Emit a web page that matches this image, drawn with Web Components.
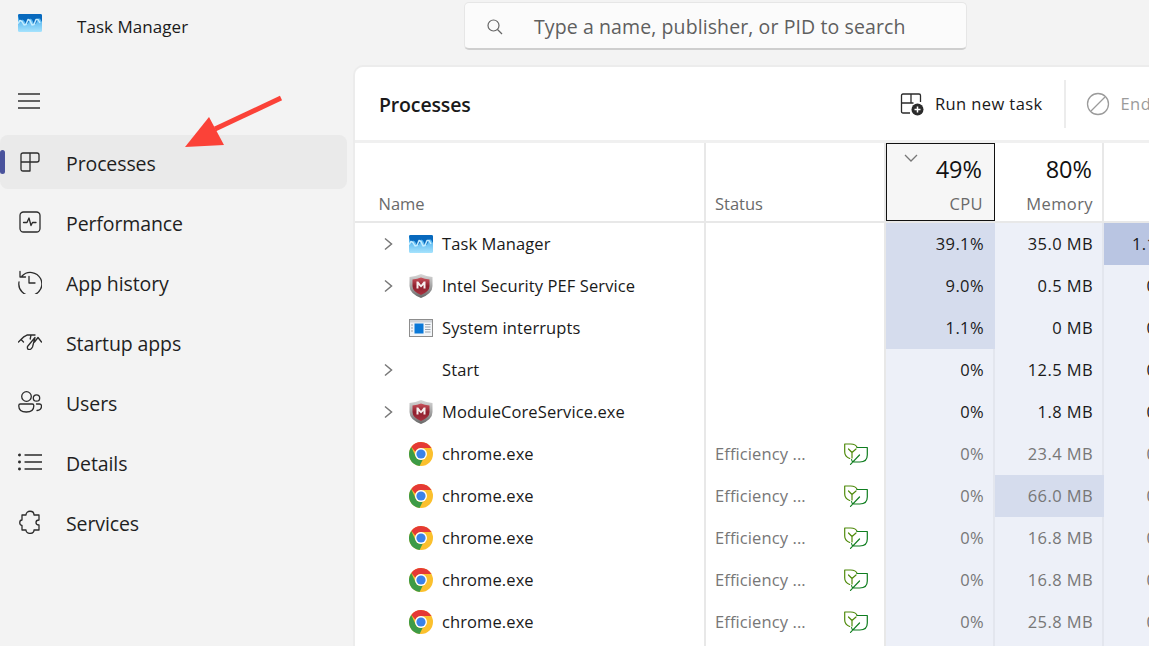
<!DOCTYPE html>
<html>
<head>
<meta charset="utf-8">
<title>Task Manager</title>
<style>
  html, body { margin: 0; height: 100%; overflow: hidden; background: #f3f3f3; }
  body { font-family: "Open Sans", "Noto Sans", sans-serif; color: #1b1b1b; }
  .shell { display: grid; grid-template-columns: 353px 796px; grid-template-rows: 65px 581px; height: 646px; width: 1149px; position: relative; overflow: hidden; }
  tm-titlebar { grid-column: 1 / 3; }
</style>
</head>
<body>
<template id="i-mcafee">
  <svg width="24" height="24" viewBox="0 0 24 24"><defs><linearGradient id="sv" x1="0" y1="0" x2="0" y2="1"><stop offset="0" stop-color="#d8d8d8"/><stop offset=".6" stop-color="#9a9a9a"/><stop offset="1" stop-color="#666"/></linearGradient><linearGradient id="rd" x1="0" y1="0" x2="0" y2="1"><stop offset="0" stop-color="#c9525c"/><stop offset=".5" stop-color="#8f1f2d"/><stop offset="1" stop-color="#a8323f"/></linearGradient></defs><path d="M.5 3q6-.5 11.500-3q5.500 2.500 11.500 3v9q0 7.500-11.500 12Q.5 19.500 .5 12z" fill="url(#sv)"/><path d="M3.500 5.500q5-.5 8.500-2q3.500 1.500 8.500 2v6.500q0 5.500-8.500 9Q3.500 17.500 3.500 12z" fill="url(#rd)"/><path d="M7.500 14.500V7.500h1.800L12 11l2.700-3.500h1.800v7h-2v-3.500L12 13.500l-2.500-2.500v3.500z" fill="#f6eeee"/></svg>
</template>
<template id="i-tm">
  <svg width="24" height="18" viewBox="0 0 24 18"><defs><linearGradient id="tmb" x1="0" y1="0" x2="0" y2="1"><stop offset="0" stop-color="#2f9fe8"/><stop offset="1" stop-color="#a6e3fd"/></linearGradient></defs><rect width="24" height="18" rx="1.500" fill="url(#tmb)"/><path d="M0 1.500Q0 0 1.500 0h21Q24 0 24 1.500V8l-2-3.500-2 0-2 5-2 .5-2-4.500-2-1-2 5-2 .5-2-3.500-2-1-2 3z" fill="#0869bd"/><path d="M0 9.500l2-3 2 1 2 3.500 2-.5 2-5 2 1 2 4.500 2-.5 2-5h2l2 3.500" fill="none" stroke="#c4ecff" stroke-width="1.500" stroke-linejoin="round"/></svg>
</template>
<template id="i-sys">
  <svg width="24" height="18" viewBox="0 0 24 18"><rect x=".5" y=".5" width="23" height="17" fill="#f2f5f8" stroke="#8d8d8d"/><rect x="1" y="1" width="22" height="2.500" fill="#cfd3d8"/><rect x="5.500" y="4.500" width="9" height="10" fill="#0a78d7"/><path d="M2 6h2M2 9h2M2 12h2M16 5.500h5.500M16 8h5.500M16 10.500h5.500M16 13h5.500" stroke="#9aa3ad"/></svg>
</template>
<template id="i-chrome">
  <svg width="24" height="24" viewBox="0 0 24 24"><circle cx="12" cy="12" r="12" fill="#fbc02d"/><path d="M12 0a12 12 0 0 1 10.400 6H12a6 6 0 0 0-5.600 3.800L2.300 5A12 12 0 0 1 12 0z" fill="#e53935"/><path d="M2.300 5l4.500 9.800a6 6 0 0 0 6.900 3L10.600 24A12 12 0 0 1 2.300 5z" fill="#3d9b46"/><circle cx="12" cy="12" r="6" fill="#fff"/><circle cx="12" cy="12" r="4.600" fill="#3b82e8"/></svg>
</template>
<template id="i-leaf">
  <svg width="24" height="22" viewBox="0 0 24 22" fill="none" stroke-width="1.200" stroke-linejoin="round" stroke-linecap="round"><path d="M.7 1h6q5 0 6.500 3.500M.7 1v8q0 4.500 5 6.500M4.500 6l3.500 3.500M12 6L8 9.500v5.500" stroke="#4f8a0a"/><path d="M13 4.500h10.300v7.500q0 7-7.500 7H9.500q-1.500 0-2-2.500M6.500 21.300l9-9.300" stroke="#0f7d1f"/></svg>
</template>

<div class="shell">
  <tm-titlebar></tm-titlebar>
  <tm-sidebar></tm-sidebar>
  <tm-panel></tm-panel>
  <tm-arrow></tm-arrow>
</div>

<script>
const iconUse = (id) => document.getElementById(id).innerHTML;

const COLUMNS = '349px 2px 178px 2px 109px 109px 109px';

class TmTitlebar extends HTMLElement {
  constructor() {
    super();
    this.attachShadow({ mode: 'open' });
  }

  connectedCallback() {
    this.shadowRoot.innerHTML = `
      <style>
        :host { display: flex; height: 65px; align-items: flex-start; box-sizing: border-box; }
        .logo { margin: 14px 0 0 18px; width: 24px; height: 18px; }
        .name { margin: 16px 0 0 35px; width: 387px; font-size: 17px; line-height: 22px; color: #1a1a1a; letter-spacing: .05px; }
        .search { box-sizing: border-box; width: 503px; height: 48px; margin-top: 2px; padding-top: 2px; background: #fbfbfb; border: 1px solid #e6e6e6; border-bottom: 2px solid #cfcfcf; border-radius: 5px; display: flex; align-items: center; padding-left: 21px; gap: 30px; color: #5f5f5f; font-size: 19.500px; letter-spacing: .1px; }
        svg { display: block; }
      </style>
      <div class="logo">${iconUse('i-tm')}</div>
      <div class="name">Task Manager</div>
      <div class="search">
        <svg width="18" height="18" viewBox="0 0 18 18" fill="none" stroke="#666" stroke-width="1.200"><circle cx="7.500" cy="7.500" r="5.500"/><path d="M11.500 11.500L16 16"/></svg>
        <span>Type a name, publisher, or PID to search</span>
      </div>
    `;
  }
}

class TmNavItem extends HTMLElement {
  constructor() {
    super();
    this.attachShadow({ mode: 'open' });
  }

  connectedCallback() {
    const active = this.hasAttribute('active');
    this.shadowRoot.innerHTML = `
      <style>
        :host { display: flex; align-items: center; height: 54px; width: 347px; margin-bottom: 6px; border-radius: 8px; position: relative; font-size: 19.500px; color: #1f1f1f; letter-spacing: -.1px; }
        :host([active]) { background: #eaeaea; }
        .bar { position: absolute; left: 0; top: 15px; width: 5px; height: 24px; border-radius: 2.500px; background: #4a539c; }
        .ico { width: 26px; height: 26px; margin-left: 17px; margin-right: 23px; display: flex; align-items: center; justify-content: center; flex: none; }
        .txt { padding-top: 2px; }
      </style>
      ${active ? '<div class="bar"></div>' : ''}
      <div class="ico"><slot name="icon"></slot></div>
      <div class="txt"><slot></slot></div>
    `;
  }
}

class TmSidebar extends HTMLElement {
  constructor() {
    super();
    this.attachShadow({ mode: 'open' });
  }

  connectedCallback() {
    const stroke = 'fill="none" stroke="#2b2b2b" stroke-width="1.300" stroke-linecap="round" stroke-linejoin="round"';
    this.shadowRoot.innerHTML = `
      <style>
        :host { display: block; padding-top: 25px; }
        .menu { display: block; margin: 0 0 23px 18px; }
      </style>
      <svg class="menu" width="22" height="22" viewBox="0 0 22 22" fill="none" stroke="#333" stroke-width="1.400"><path d="M0 4h22M0 11h22M0 18h22"/></svg>
      <tm-nav-item active>
        <svg slot="icon" width="20" height="20" viewBox="0 0 20 20" ${stroke}><path d="M10 19H3q-2 0-2-2V3q0-2 2-2h14q2 0 2 2v5q0 2-2 2H1M10 1v18"/></svg>
        Processes
      </tm-nav-item>
      <tm-nav-item>
        <svg slot="icon" width="22" height="22" viewBox="0 0 22 22" ${stroke}><rect x="1" y="1" width="20" height="20" rx="3.500"/><path d="M4.500 11.500h3.500l2-4.500 2 7.500 1.500-3h3.500"/></svg>
        Performance
      </tm-nav-item>
      <tm-nav-item>
        <svg slot="icon" width="24" height="24" viewBox="0 0 24 24" ${stroke}><path d="M4 6A11.500 11.500 0 1 1 1 12M2 1.500V7h5.500M11 6.500v6.500h6"/></svg>
        App history
      </tm-nav-item>
      <tm-nav-item>
        <svg slot="icon" width="24" height="16" viewBox="0 0 24 16" ${stroke}><path d="M.5 8L3 5.500 5.500 8M3 5.500Q5.500 2.500 9 1.200M9 1H17M13 1l-.8 4M16.500 8L20 3.500 23.500 8M9.500 12.500L17 3.500 14.500 13Q13 16 10.500 15.500 9 15 9.500 12.500z"/></svg>
        Startup apps
      </tm-nav-item>
      <tm-nav-item>
        <svg slot="icon" width="24" height="22" viewBox="0 0 24 22" ${stroke}><circle cx="8.500" cy="5.500" r="4.800"/><circle cx="18.500" cy="7" r="3.200"/><path d="M.8 14.500q0-1.500 1.500-1.500h12q1.500 0 1.500 1.500v.5q0 6-7.500 6T.8 15zM18.500 13H21.500q2 0 2 2 0 4-4.500 4.500"/></svg>
        Users
      </tm-nav-item>
      <tm-nav-item>
        <svg slot="icon" width="24" height="18" viewBox="0 0 24 18" ${stroke}><path d="M7 2h17M7 9h17M7 16h17"/><circle cx="1.500" cy="2" r=".8" fill="#2b2b2b"/><circle cx="1.500" cy="9" r=".8" fill="#2b2b2b"/><circle cx="1.500" cy="16" r=".8" fill="#2b2b2b"/></svg>
        Details
      </tm-nav-item>
      <tm-nav-item>
        <svg slot="icon" width="22" height="24" viewBox="0 0 22 24" ${stroke}><path d="M7 5C7 0 15 0 15 5H20V10C16 10 16 15 20 15V20H15C15 24.500 7 24.500 7 20H3V15.500C0 15.500 0 10 3 10V5Z"/></svg>
        Services
      </tm-nav-item>
    `;
  }
}

class TmRow extends HTMLElement {
  constructor() {
    super();
    this.attachShadow({ mode: 'open' });
  }

  connectedCallback() {
    const d = this.dataset;
    const chev = d.expand !== undefined
      ? '<svg width="10" height="14" viewBox="0 0 10 14" fill="none" stroke="#777" stroke-width="1.500"><path d="M1 1.500l6.500 5.500-6.500 5.500"/></svg>' : '';
    const icon = d.icon ? iconUse(d.icon) : '';
    const status = d.status ? `<span>${d.status}</span><span class="leaf">${iconUse('i-leaf')}</span>` : '';
    this.shadowRoot.innerHTML = `
      <style>
        :host { display: grid; grid-template-columns: ${COLUMNS}; height: 42px; font-size: 16.500px; color: ${d.status ? '#777' : '#1a1a1a'}; letter-spacing: .1px; }
        .name { display: flex; align-items: center; color: #1a1a1a; background: #fff; }
        .chev { width: 10px; margin-left: 29px; margin-right: 15px; display: flex; }
        .ico { width: 24px; height: 24px; margin-right: 9px; display: flex; align-items: center; justify-content: center; }
        .txt { padding-bottom: 2px; }
        .status { display: flex; align-items: center; padding: 0 0 2px 9px; position: relative; background: #fff; letter-spacing: .1px; }
        .leaf { position: absolute; left: 138px; top: 10px; }
        .sep { background: #e8e8e8; }
        .num { display: flex; align-items: center; justify-content: flex-end; padding: 0 11px 2px 0; letter-spacing: .4px; white-space: nowrap; }
        .l1 { background: #edf0f8; box-shadow: inset -2px 0 #e3e6ee; }
        .l2 { background: #d5dced; }
        .l3 { background: #b9c5e2; }
        svg { display: block; }
      </style>
      <div class="name"><div class="chev">${chev}</div><div class="ico">${icon}</div><div class="txt"><slot></slot></div></div>
      <div class="sep"></div>
      <div class="status">${status}</div>
      <div class="sep"></div>
      <div class="num ${d.cpuHeat}">${d.cpu}</div>
      <div class="num ${d.memHeat}">${d.mem}</div>
      <div class="num ${d.diskHeat}">${d.disk}</div>
    `;
  }
}

class TmPanel extends HTMLElement {
  constructor() {
    super();
    this.attachShadow({ mode: 'open' });
  }

  connectedCallback() {
    const rows = [
      ['Task Manager', 'i-tm', 1, '', '39.1%', 'l2', '35.0 MB', 'l1', '1.1 MB/s', 'l3'],
      ['Intel Security PEF Service', 'i-mcafee', 1, '', '9.0%', 'l2', '0.5 MB', 'l1', '0 MB/s', 'l1'],
      ['System interrupts', 'i-sys', 0, '', '1.1%', 'l2', '0 MB', 'l1', '0 MB/s', 'l1'],
      ['Start', '', 1, '', '0%', 'l1', '12.5 MB', 'l1', '0 MB/s', 'l1'],
      ['ModuleCoreService.exe', 'i-mcafee', 1, '', '0%', 'l1', '1.8 MB', 'l1', '0 MB/s', 'l1'],
      ['chrome.exe', 'i-chrome', 0, 'Efficiency ...', '0%', 'l1', '23.4 MB', 'l1', '0 MB/s', 'l1'],
      ['chrome.exe', 'i-chrome', 0, 'Efficiency ...', '0%', 'l1', '66.0 MB', 'l2', '0 MB/s', 'l1'],
      ['chrome.exe', 'i-chrome', 0, 'Efficiency ...', '0%', 'l1', '16.8 MB', 'l1', '0 MB/s', 'l1'],
      ['chrome.exe', 'i-chrome', 0, 'Efficiency ...', '0%', 'l1', '16.8 MB', 'l1', '0 MB/s', 'l1'],
      ['chrome.exe', 'i-chrome', 0, 'Efficiency ...', '0%', 'l1', '25.8 MB', 'l1', '0 MB/s', 'l1'],
      ['', '', 0, '', '', 'l1', '', 'l1', '', 'l1'],
    ];
    const rowHtml = rows.map((r) => `<tm-row data-icon="${r[1]}" ${r[2] ? 'data-expand' : ''} data-status="${r[3]}" data-cpu="${r[4]}" data-cpu-heat="${r[5]}" data-mem="${r[6]}" data-mem-heat="${r[7]}" data-disk="${r[8]}" data-disk-heat="${r[9]}">${r[0]}</tm-row>`).join('');

    this.shadowRoot.innerHTML = `
      <style>
        :host { display: block; background: #fff; border-top: 2px solid #ececec; border-left: 2px solid #ececec; border-top-left-radius: 10px; overflow: hidden; height: 581px; box-sizing: border-box; }
        .toolbar { height: 73px; display: flex; align-items: center; border-bottom: 3px solid #f0f0f0; }
        .toolbar > * { flex: none; }
        h1 { margin: 2px 0 0 24px; font-size: 19.500px; font-weight: 600; width: 521px; color: #1a1a1a; letter-spacing: -.15px; }
        .cmd { display: flex; align-items: center; gap: 11px; font-size: 16.500px; color: #1a1a1a; white-space: nowrap; letter-spacing: .4px; }
        .div { width: 2px; height: 48px; background: #ececec; margin: 0 20px 0 21px; }
        .off { color: #9b9b9b; }
        .head { display: grid; grid-template-columns: ${COLUMNS}; height: 78px; border-bottom: 2px solid #e8e8e8; color: #6a6a6a; font-size: 16.500px; }
        .sep { background: #e8e8e8; }
        .cell { display: flex; flex-direction: column; justify-content: flex-end; padding-bottom: 6px; box-sizing: border-box; }
        .nm { padding-left: 23.500px; }
        .st { padding-left: 9px; }
        .col { align-items: flex-end; padding-right: 11px; position: relative; box-shadow: inset -2px 0 #e8e8e8; letter-spacing: .4px; }
        .pct { font-size: 23.500px; color: #111; line-height: 30px; margin-bottom: 9px; margin-right: 1px; letter-spacing: 0; }
        .lab { line-height: 22px; }
        .sel { background: #f6f6f6; box-shadow: none; outline: 1.500px solid #111; outline-offset: -1.500px; padding-right: 12px; }
        .caret { position: absolute; left: 18px; top: 11px; }
        svg { display: block; }
      </style>
      <div class="toolbar">
        <h1>Processes</h1>
        <div class="cmd">
          <svg width="24" height="24" viewBox="0 0 24 24" fill="none" stroke="#2b2b2b" stroke-width="1.300"><path d="M10 21H3q-1.500 0-1.500-1.500v-16Q1.500 2 3 2h16q1.500 0 1.500 1.500V10M1.500 11h12M11 2v9"/><circle cx="17.500" cy="17.500" r="6" fill="#2b2b2b" stroke="none"/><path d="M17.500 14.500v6M14.500 17.500h6" stroke="#fff" stroke-width="1.500"/></svg>
          <span>Run new task</span>
        </div>
        <div class="div"></div>
        <div class="cmd off">
          <svg width="24" height="24" viewBox="0 0 24 24" fill="none" stroke="#9b9b9b" stroke-width="1.300"><circle cx="12" cy="12" r="10.500"/><path d="M5 19L19 5"/></svg>
          <span>End task</span>
        </div>
      </div>
      <div class="head">
        <div class="cell nm"><span class="lab">Name</span></div>
        <div class="sep"></div>
        <div class="cell st"><span class="lab">Status</span></div>
        <div class="sep"></div>
        <div class="cell col sel">
          <svg class="caret" width="14" height="8" viewBox="0 0 14 8" fill="none" stroke="#777" stroke-width="1.300"><path d="M1 1l6 6 6-6"/></svg>
          <span class="pct">49%</span><span class="lab">CPU</span>
        </div>
        <div class="cell col"><span class="pct">80%</span><span class="lab">Memory</span></div>
        <div class="cell col"></div>
      </div>
      ${rowHtml}
    `;
  }
}

class TmArrow extends HTMLElement {
  constructor() {
    super();
    this.attachShadow({ mode: 'open' });
  }

  connectedCallback() {
    this.shadowRoot.innerHTML = `
      <style>
        :host { position: absolute; left: 180px; top: 90px; width: 110px; height: 65px; }
      </style>
      <svg width="110" height="65" viewBox="0 0 110 65"><path d="M101 8L35 39" stroke="#fb4238" stroke-width="5" fill="none"/><path d="M5 57L29 27l15 28z" fill="#fb4238"/></svg>
    `;
  }
}

customElements.define('tm-titlebar', TmTitlebar);
customElements.define('tm-nav-item', TmNavItem);
customElements.define('tm-sidebar', TmSidebar);
customElements.define('tm-row', TmRow);
customElements.define('tm-panel', TmPanel);
customElements.define('tm-arrow', TmArrow);
</script>
</body>
</html>
